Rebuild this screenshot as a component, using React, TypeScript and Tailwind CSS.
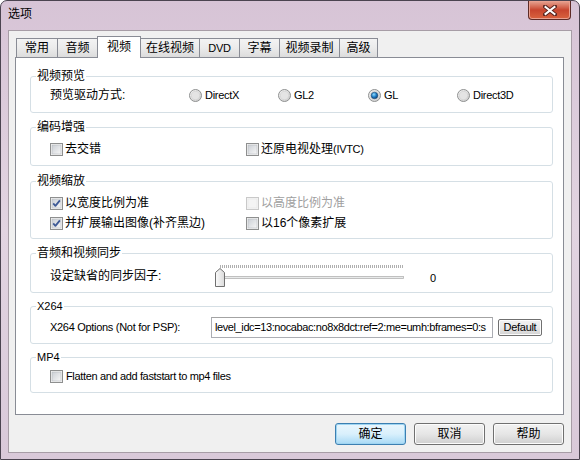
import { useId, type ReactNode } from 'react'

const tabs = [
  { label: '常用', w: 'w-[42px]' },
  { label: '音频', w: 'w-[41px]' },
  { label: '视频', w: 'w-[44px]', active: true },
  { label: '在线视频', w: 'w-[60px]' },
  { label: 'DVD', w: 'w-[41px]', en: true },
  { label: '字幕', w: 'w-[41px]' },
  { label: '视频录制', w: 'w-[61px]' },
  { label: '高级', w: 'w-[39px]' },
]

function Radio({ checked }: { checked?: boolean }) {
  const id = useId().replace(/:/g, '')
  return (
    <svg width="13" height="13" viewBox="0 0 13 13" className="shrink-0">
      <defs>
        <linearGradient id={`o${id}`} x1="0" y1="0" x2="1" y2="1">
          <stop offset="0" stopColor="#f6f6f6" />
          <stop offset="1" stopColor="#c9c9c9" />
        </linearGradient>
        <radialGradient id={`d${id}`} cx="0.4" cy="0.35" r="0.7">
          <stop offset="0" stopColor="#8fdcff" />
          <stop offset="0.55" stopColor="#1c79c2" />
          <stop offset="1" stopColor="#0b3f74" />
        </radialGradient>
      </defs>
      <circle cx="6.5" cy="6.5" r="6" fill={`url(#o${id})`} stroke="#8f9191" />
      <circle cx="6.5" cy="6.5" r="4.2" fill="#e4e4e4" stroke="#d0d0d0" strokeWidth="0.6" />
      {checked && <circle cx="6.5" cy="6.5" r="3.3" fill={`url(#d${id})`} stroke="#163d63" strokeWidth="0.5" />}
    </svg>
  )
}

function Check({ checked, disabled }: { checked?: boolean; disabled?: boolean }) {
  const id = useId().replace(/:/g, '')
  return (
    <svg width="13" height="13" viewBox="0 0 13 13" className="shrink-0">
      <defs>
        <linearGradient id={`c${id}`} x1="0" y1="0" x2="1" y2="1">
          <stop offset="0" stopColor={disabled ? '#f4f4f4' : '#cbcfd5'} />
          <stop offset="1" stopColor={disabled ? '#f4f4f4' : '#f7f7f7'} />
        </linearGradient>
      </defs>
      <rect x="0.5" y="0.5" width="12" height="12" fill="#f4f4f4" stroke={disabled ? '#c9c9c9' : '#8e8f8f'} />
      <rect x="2" y="2" width="9" height="9" fill={`url(#c${id})`} stroke={disabled ? '#e2e2e2' : '#aeb3b9'} strokeWidth="0.5" />
      {checked && (
        <path d="M3.2 6.4 L5.4 8.8 L9.9 3.4" fill="none" stroke="#3f5a96" strokeWidth="1.8" strokeLinejoin="round" />
      )}
    </svg>
  )
}

function Group({ title, className, children, en }: { title: string; className: string; children: ReactNode; en?: boolean }) {
  return (
    <fieldset className={`rounded-[3px] border border-[#d5dfe5] ${className}`}>
      <legend className={`ml-[5px] px-[1px] leading-[14px] ${en ? 'text-[11px]' : 'text-[12px]'}`}>{title}</legend>
      {children}
    </fieldset>
  )
}

function Slider() {
  const ticks = []
  for (let x = 5; x <= 187; x += 2) ticks.push(x)
  return (
    <svg width="190" height="24" viewBox="0 0 190 24" className="shrink-0">
      {ticks.map((x) => (
        <line key={x} x1={x + 0.5} y1="1" x2={x + 0.5} y2="4" stroke="#9a9a9a" strokeWidth="0.8" />
      ))}
      <rect x="0.5" y="12.5" width="188" height="2" fill="#e8eaea" stroke="#b4b4b4" strokeWidth="0.8" />
      <defs>
        <linearGradient id="thumb" x1="0" y1="0" x2="1" y2="0">
          <stop offset="0" stopColor="#fbfbfb" />
          <stop offset="1" stopColor="#dadada" />
        </linearGradient>
      </defs>
      <path d="M0.5 8.5 L5 4.5 L9.5 8.5 V22.5 H0.5 Z" fill="url(#thumb)" stroke="#707070" strokeLinejoin="round" />
    </svg>
  )
}

function Button({ label, primary }: { label: string; primary?: boolean }) {
  return (
    <div
      className={`flex h-[22px] w-[71px] items-center justify-center rounded-[3px] border text-[12px] ${
        primary
          ? 'border-[#3c7fb1] bg-gradient-to-b from-[#eaf6fd] via-[#d9f0fc] to-[#a7d9f5] shadow-[inset_0_0_0_1px_#9fd5f2]'
          : 'border-[#707070] bg-gradient-to-b from-[#f2f2f2] via-[#e6e6e6] to-[#cfcfcf] shadow-[inset_0_0_0_1px_#fcfcfc]'
      }`}
    >
      {label}
    </div>
  )
}

export default function App() {
  return (
    <div className="flex h-[460px] w-[580px] flex-col overflow-hidden rounded-t-[7px] border border-[#4b4450] bg-gradient-to-b from-[#d7c4d6] via-[#e2d4e1] to-[#d9c9d9] font-['Liberation_Sans','Noto_Sans_CJK_SC',sans-serif] text-black">
      <div className="flex h-[29px] shrink-0 items-start justify-between">
        <span className="ml-[7px] mt-[5px] text-[12px] leading-[16px]">选项</span>
        <div className="mr-[8px] flex h-[19px] w-[43px] items-center justify-center rounded-b-[4px] border border-t-0 border-[#5d2b26] bg-gradient-to-b from-[#e6a493] via-[#c8452e] to-[#d9633f] shadow-[inset_0_0_0_1px_#eaa08f]">
          <svg width="14" height="11" viewBox="0 0 14 11">
            <path d="M2 1.5 L12 9.5 M12 1.5 L2 9.5" stroke="#5a2620" strokeWidth="4" strokeLinecap="square" />
            <path d="M2.5 2 L11.5 9 M11.5 2 L2.5 9" stroke="#ffffff" strokeWidth="2" strokeLinecap="square" />
          </svg>
        </div>
      </div>

      <div className="mx-[7px] flex h-[423px] flex-col border border-[#a79da6] bg-[#f0f0f0] pb-[7px] pl-[6px] pr-[7px] pt-[5px]">
        <div className="flex h-[21px] items-end pl-[1px]">
          {tabs.map((t, i) =>
            t.active ? (
              <div
                key={t.label}
                className={`relative z-10 -mb-px flex h-[22px] ${t.w} ${i ? '-ml-px' : ''} items-start justify-center border border-b-0 border-[#898c95] bg-white pt-[2px] text-[12px] leading-[16px]`}
              >
                {t.label}
              </div>
            ) : (
              <div
                key={t.label}
                className={`flex h-[19px] ${t.w} ${i ? '-ml-px' : ''} items-center justify-center border border-b-0 border-[#898c95] bg-gradient-to-b from-[#f3f3f3] via-[#ebebeb] to-[#dcdcdc] leading-[16px] ${
                  t.en ? 'text-[11px] tracking-[-0.2px]' : 'text-[12px]'
                }`}
              >
                {t.label}
              </div>
            ),
          )}
        </div>

        <div className="h-[358px] w-[549px] border border-[#898c95] bg-white pl-[14px] pr-[10px] pt-[11px]">
          <Group title="视频预览" className="h-[44px]">
            <div className="mt-[4px] flex h-[16px] items-center pl-[19px] text-[12px]">
              <span className="w-[139px]">预览驱动方式:</span>
              {[
                { l: 'DirectX', w: 'w-[89px]' },
                { l: 'GL2', w: 'w-[90px]' },
                { l: 'GL', w: 'w-[89px]', c: true },
                { l: 'Direct3D', w: 'w-[90px]' },
              ].map((r) => (
                <span key={r.l} className={`flex items-center ${r.w}`}>
                  <Radio checked={r.c} />
                  <span className="ml-[3px] text-[11px] tracking-[-0.3px]">{r.l}</span>
                </span>
              ))}
            </div>
          </Group>

          <Group title="编码增强" className="mt-[7px] h-[46px]">
            <div className="mt-[7px] flex h-[16px] items-center pl-[19px] text-[12px]">
              <span className="flex w-[196px] items-center">
                <Check />
                <span className="ml-[2px]">去交错</span>
              </span>
              <span className="flex items-center">
                <Check />
                <span className="ml-[2px]">
                  还原电视处理<span className="text-[11px] tracking-[-0.3px]">(IVTC)</span>
                </span>
              </span>
            </div>
          </Group>

          <Group title="视频缩放" className="mt-[8px] h-[65px]">
            <div className="mt-[7px] flex flex-col gap-[4px] pl-[19px] text-[12px]">
              <div className="flex h-[16px] items-center">
                <span className="flex w-[196px] items-center">
                  <Check checked />
                  <span className="ml-[2px]">以宽度比例为准</span>
                </span>
                <span className="flex items-center text-[#a0a0a0]">
                  <Check disabled />
                  <span className="ml-[2px]">以高度比例为准</span>
                </span>
              </div>
              <div className="flex h-[16px] items-center">
                <span className="flex w-[196px] items-center">
                  <Check checked />
                  <span className="ml-[2px]">并扩展输出图像(补齐黑边)</span>
                </span>
                <span className="flex items-center">
                  <Check />
                  <span className="ml-[2px]">以16个像素扩展</span>
                </span>
              </div>
            </div>
          </Group>

          <Group title="音频和视频同步" className="mt-[7px] h-[47px]">
            <div className="mt-[4px] flex h-[24px] items-center pl-[19px] text-[12px]">
              <span className="w-[165px]">设定缺省的同步因子:</span>
              <Slider />
              <span className="ml-[25px] mt-[4px] text-[11px]">0</span>
            </div>
          </Group>

          <Group title="X264" en className="mt-[6px] h-[45px]">
            <div className="mt-[4px] flex h-[21px] items-center pl-[19px] text-[11px]">
              <span className="w-[161px] tracking-[-0.3px]">X264 Options (Not for PSP):</span>
              <div className="flex h-[21px] w-[282px] items-center overflow-hidden whitespace-nowrap border border-[#abadb3] border-t-[#a3a3a3] bg-white pl-[3px] tracking-[-0.4px]">
                level_idc=13:nocabac:no8x8dct:ref=2:me=umh:bframes=0:s
              </div>
              <div className="ml-[5px] flex h-[17px] w-[44px] items-center justify-center rounded-[2px] border border-[#707070] bg-gradient-to-b from-[#f2f2f2] via-[#e8e8e8] to-[#d2d2d2] tracking-[-0.3px] shadow-[inset_0_0_0_1px_#fcfcfc]">
                Default
              </div>
            </div>
          </Group>

          <Group title="MP4" en className="mt-[6px] h-[43px]">
            <div className="mt-[4px] flex h-[16px] items-center pl-[19px] text-[11px]">
              <Check />
              <span className="ml-[3px] tracking-[-0.35px]">Flatten and add faststart to mp4 files</span>
            </div>
          </Group>
        </div>

        <div className="mt-[8px] flex justify-end gap-[8px]">
          <Button label="确定" primary />
          <Button label="取消" />
          <Button label="帮助" />
        </div>
      </div>
    </div>
  )
}
